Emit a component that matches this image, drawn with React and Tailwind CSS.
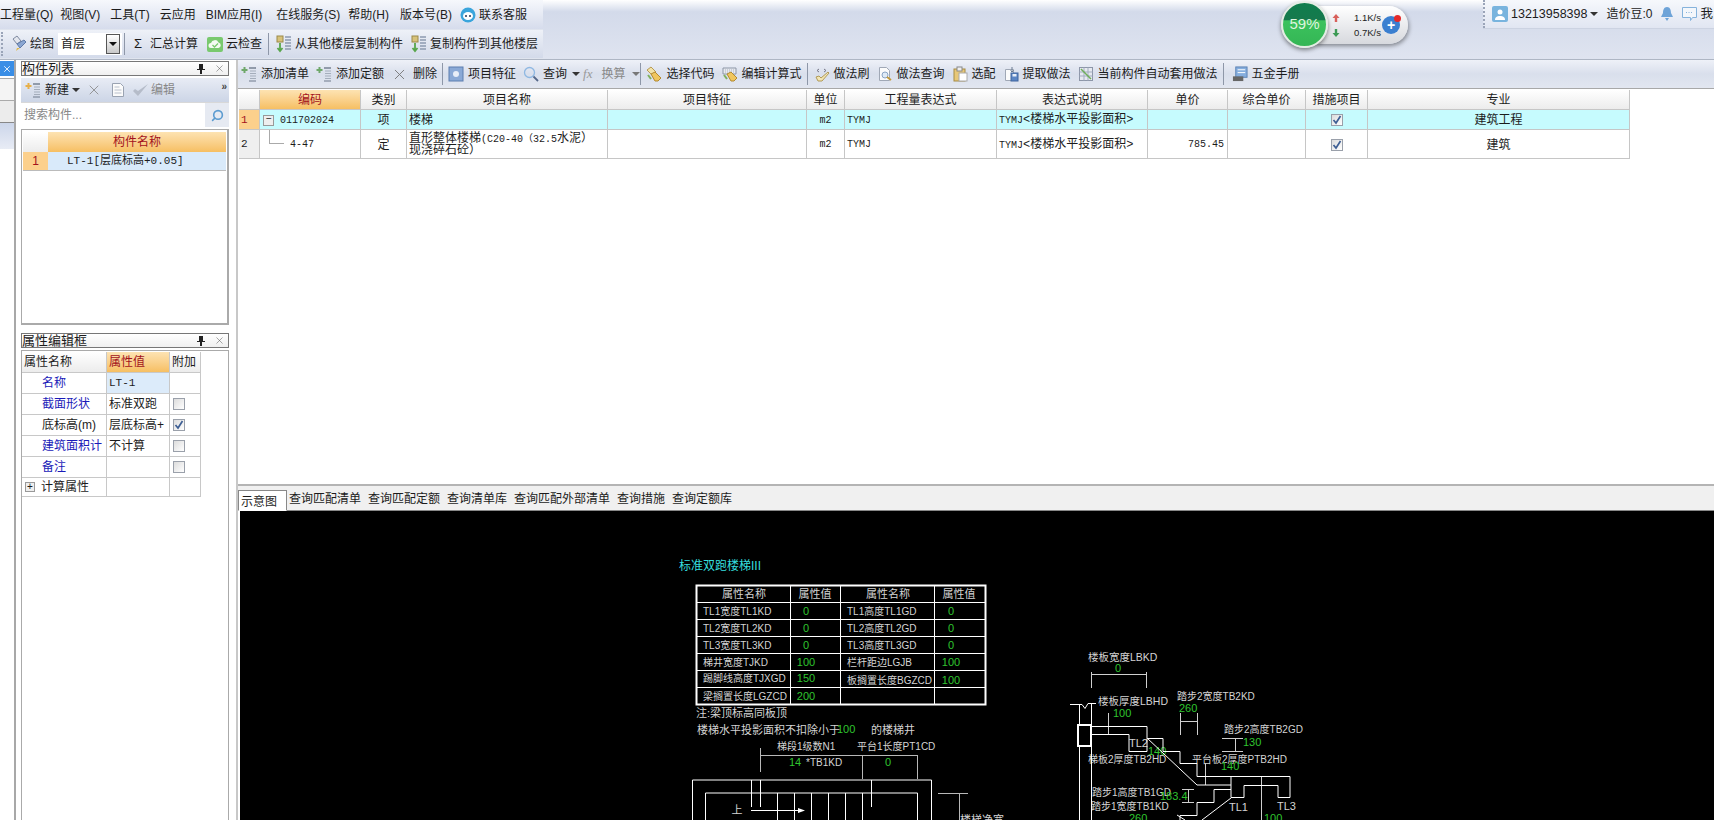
import { Search, X } from 'lucide-react'

const cjk = 'font-["Liberation_Sans","Noto_Sans_CJK_SC",sans-serif]'
const mono = 'font-["Liberation_Mono","Noto_Sans_CJK_SC",monospace]'
const headCell = 'bg-gradient-to-b from-white to-[#ececec]'
const orangeCell = 'bg-gradient-to-b from-[#fde3b2] to-[#f6bf62] text-[#a3121c]'

function PlusLines({ color = '#6fa86a' }) {
  return (
    <svg width="16" height="16" viewBox="0 0 16 16">
      <path d="M3.500 1v6M.5 4h6" stroke={color} strokeWidth="2" />
      <path d="M8 2h7" stroke="#6f7a8c" strokeWidth="1.4" />
      <path d="M9 5h6M9 7.500h6M9 10h6M9 12.500h6" stroke="#a4adbb" />
      <path d="M8 15h7" stroke="#6f7a8c" />
    </svg>
  )
}

function Doc({ fill = '#fbfbfb', accent = '#b9c0cc' }) {
  return (
    <svg width="16" height="16" viewBox="0 0 16 16">
      <path d="M2.500 1.500h8l3 3v10h-11z" fill={fill} stroke="#9aa3b2" />
      <path d="M4.500 5h5M4.500 8h7M4.500 11h7" stroke={accent} />
    </svg>
  )
}

function Hand({ keys }) {
  return (
    <svg width="16" height="16" viewBox="0 0 16 16">
      {keys ? (
        <path d="M1 2h13v6H1z" fill="#e7eaf0" stroke="#8d96a6" />
      ) : (
        <path d="M1 4l4-3 5 5-4 3z" fill="#f2e3a8" stroke="#b79a55" />
      )}
      {keys && <path d="M3 4h9M3 6h9" stroke="#a9b1c0" strokeDasharray="1 1" />}
      <path d="M5 8l4-2 6 6-3 3h-3z" fill="#f0c65e" stroke="#b38a30" />
      <path d="M2 9l3 4" stroke="#7fb05e" strokeWidth="2" />
    </svg>
  )
}

function TreeCopy({ arrow }) {
  return (
    <svg width="17" height="18" viewBox="0 0 17 18">
      <rect x="2" y="1" width="6" height="6" fill="#d7c27a" stroke="#9c8a4a" />
      <path d="M5 8v8M2.500 13l2.500 3 2.500-3" fill="none" stroke={arrow} strokeWidth="1.8" />
      <path d="M10 2h6M10 5h6M10 8h6M10 11h6M10 14h6" stroke="#8d9bb0" strokeWidth="1.3" />
    </svg>
  )
}

function Check({ on }) {
  return (
    <span className="flex h-[12px] w-[12px] items-center justify-center border border-[#9aa0aa] bg-gradient-to-br from-[#dcdcdc] to-white">
      {on && (
        <svg width="10" height="10" viewBox="0 0 10 10">
          <path d="M1.5 5l2.5 3 4.5-7" fill="none" stroke="#3e5f94" strokeWidth="1.7" />
        </svg>
      )}
    </span>
  )
}

function Caret({ color = '#333' }) {
  return <span className="block h-0 w-0 border-x-[4px] border-t-[4px] border-x-transparent" style={{ borderTopColor: color }} />
}

function Sep({ className = '' }) {
  return <span className={`h-[22px] w-px bg-[#8e97a8] ${className}`} />
}

function Tool({ icon, label, gray, className = '' }) {
  return (
    <div className={`flex items-center gap-[4px] ${gray ? 'text-[#888]' : 'text-[#1c1c1c]'} ${className}`}>
      {icon}
      <span>{label}</span>
    </div>
  )
}

function TopBar() {
  const menus = [
    ['工程量(Q)', 0],
    ['视图(V)', 7],
    ['工具(T)', 10],
    ['云应用', 10],
    ['BIM应用(I)', 10],
    ['在线服务(S)', 14],
    ['帮助(H)', 8],
    ['版本号(B)', 11],
  ]
  return (
    <div className="relative flex h-[60px] shrink-0 justify-between border-b border-[#aeb6c4] bg-gradient-to-b from-white via-[#d3daea] via-20% to-[#dfe4f0]">
      <div className="w-[543px]">
        <div className="flex h-[29px] items-center bg-gradient-to-b from-[#f6f8fc] to-[#d6dcec] text-[12px] text-[#1c1c1c]">
          {menus.map(([m, ml]) => (
            <span key={m} style={{ marginLeft: ml }}>{m}</span>
          ))}
          <svg className="ml-[8px]" width="16" height="16" viewBox="0 0 16 16">
            <circle cx="8" cy="8" r="7.500" fill="#3aa5dc" />
            <ellipse cx="8" cy="9" rx="5" ry="4" fill="#fff" />
            <circle cx="6" cy="9" r="1" fill="#235" />
            <circle cx="10" cy="9" r="1" fill="#235" />
          </svg>
          <span className="ml-[3px]">联系客服</span>
        </div>
        <div className="flex h-[30px] items-center border-y border-[#dfe4ee] bg-gradient-to-b from-[#eef1f8] to-[#d3daea] pl-[1px] text-[12px] text-[#1c1c1c]">
          <span className="h-[24px] w-[3px] border-l-2 border-dotted border-[#9aa4b8]" />
          <svg className="ml-[6px]" width="18" height="18" viewBox="0 0 18 18">
            <path d="M3 4l4-3 4 5-4 3z" fill="#e3e6ee" stroke="#7f8aa0" />
            <path d="M7 9l7-4 2 2-6 6z" fill="#8aa6d2" stroke="#5f7aa8" />
            <path d="M7 13l3 0-4 3z" fill="#e0b94e" />
          </svg>
          <span className="ml-[2px]">绘图</span>
          <div className="ml-[4px] flex h-[22px] w-[64px] items-center justify-between bg-white pl-[3px]">
            <span>首层</span>
            <span className="mr-[2px] flex h-[20px] w-[14px] items-center justify-center border border-[#555] bg-gradient-to-b from-white to-[#c9c9c9]">
              <Caret color="#111" />
            </span>
          </div>
          <Sep className="ml-[2px]" />
          <span className="ml-[9px] text-[13px]">Σ</span>
          <span className="ml-[8px]">汇总计算</span>
          <svg className="ml-[9px]" width="16" height="15" viewBox="0 0 16 15">
            <rect width="16" height="15" rx="2" fill="#79c96e" />
            <path d="M4 11a2.500 2.500 0 010-5 4 4 0 017.500-.500 2.800 2.800 0 010 5.500z" fill="#f4fbf2" />
            <path d="M5.500 8l2 2 3.500-3.500" fill="none" stroke="#79c96e" strokeWidth="1.300" />
          </svg>
          <span className="ml-[3px]">云检查</span>
          <Sep className="ml-[6px]" />
          <span className="ml-[6px]"><TreeCopy arrow="#58a64c" /></span>
          <span className="ml-[3px]">从其他楼层复制构件</span>
          <span className="ml-[7px]"><TreeCopy arrow="#58a64c" /></span>
          <span className="ml-[3px]">复制构件到其他楼层</span>
        </div>
      </div>

      <div className="absolute left-[1281px] top-[1px] z-10 flex">
        <div className="relative z-10 flex h-[47px] w-[47px] items-center justify-center rounded-full border-2 border-[#e4ece4] bg-[linear-gradient(180deg,#0f7d4d_0%,#16794d_40%,#3cc25d_41%,#34b655_100%)] text-[15px] text-[#dff4df] shadow-[0_2px_4px_rgba(0,0,0,0.45)]">
          59%
        </div>
        <div className="relative -ml-[12px] mt-[5px] flex h-[38px] w-[92px] items-center rounded-r-full bg-gradient-to-b from-white to-[#d7d9de] pl-[16px] text-[9.5px] leading-[15px] text-[#222] shadow-[1px_2px_4px_rgba(0,0,0,0.4)]">
          <div className="flex flex-col gap-[7px]">
            <svg width="8" height="8" viewBox="0 0 8 8">
              <path d="M4 0l3.500 4H5.200v4H2.800V4H.5z" fill="#d8605a" />
            </svg>
            <svg width="8" height="8" viewBox="0 0 8 8">
              <path d="M4 8l3.500-4H5.200V0H2.800v4H.5z" fill="#3d9a55" />
            </svg>
          </div>
          <div className="ml-[14px] flex flex-col">
            <span>1.1K/s</span>
            <span>0.7K/s</span>
          </div>
          <span className="absolute left-[66px] top-[10px] flex h-[18px] w-[18px] items-center justify-center rounded-full bg-[#3a7fd0] text-[14px] font-bold leading-none text-white">+</span>
          <span className="absolute left-[78px] top-[9px] h-[7px] w-[7px] rounded-full bg-[#e52a2a]" />
        </div>
      </div>

      <div className="flex h-[29px] w-[231px] items-center border-b border-[#ccd3e2] bg-gradient-to-b from-[#f6f8fc] to-[#e1e6f2] text-[12.5px] text-[#1c1c1c]">
        <span className="h-full w-[2px] border-l-2 border-dotted border-[#9aa4b8]" />
        <span className="ml-[7px] flex h-[16px] w-[16px] items-center justify-center rounded-[2px] bg-[#79b4de]">
          <svg width="12" height="12" viewBox="0 0 12 12">
            <circle cx="6" cy="4" r="2.500" fill="#fff" />
            <path d="M1 12c0-3 2-4 5-4s5 1 5 4z" fill="#fff" />
          </svg>
        </span>
        <span className="ml-[3px]">13213958398</span>
        <span className="ml-[3px] mr-[8px]"><Caret /></span>
        <span className="text-[12px]">造价豆:0</span>
        <svg className="ml-[7px]" width="14" height="16" viewBox="0 0 14 16">
          <path d="M7 1c3 0 4 3 4 6l2 4H1l2-4c0-3 1-6 4-6zM5 12h4l-2 3z" fill="#6da3d8" />
        </svg>
        <svg className="ml-[7px]" width="17" height="16" viewBox="0 0 17 16">
          <path d="M1.500 1.500h14v10h-4l-2 3v-3h-8z" fill="#f4f7fb" stroke="#86b3dc" />
          <path d="M5 6.500h7" stroke="#86b3dc" strokeDasharray="1 1.500" />
        </svg>
        <span className="ml-[3px]">我</span>
      </div>
    </div>
  )
}

function LeftStrip() {
  return (
    <div className="flex w-[16px] shrink-0 flex-col border-r-2 border-[#a8a8a8] pt-[1px]">
      <div className="flex h-[15px] items-center justify-center bg-[#3a8ee6] text-white">
        <X size={10} />
      </div>
      <div className="mt-[2px] h-[23px] border-y border-[#aaa] bg-[#f4f4f4]" />
      <div className="h-[22px] border-b border-[#888] bg-[#ececec]" />
      <div className="h-[26px] bg-gradient-to-b from-[#ccd6ea] to-[#e8ecf5]" />
    </div>
  )
}

function PanelTitle({ title }) {
  return (
    <div className="flex h-[15px] items-center justify-between border border-[#777] bg-gradient-to-b from-white to-[#f0f0f0] text-[13px]">
      <span>{title}</span>
      <div className="flex items-center gap-[9px] pr-[3px] text-[#444]">
        <svg width="8" height="10" viewBox="0 0 8 10">
          <path d="M2 0h4v5h2v1H5v4H3V6H0V5h2z" fill="#222" />
        </svg>
        <X size={11} strokeWidth={1} />
      </div>
    </div>
  )
}

function ComponentPanel() {
  return (
    <div className="flex h-[264px] flex-col">
      <PanelTitle title="构件列表" />
      <div className="mt-[2px] flex h-[25px] items-center border-b border-[#d8d8d8] bg-gradient-to-b from-[#e8ecf5] to-[#ccd5e6] pl-[4px] text-[12px]">
        <PlusLines color="#e7b04a" />
        <span className="ml-[4px]">新建</span>
        <span className="ml-[3px]"><Caret /></span>
        <X className="ml-[6px] text-[#8a8a8a]" size={16} strokeWidth={1.3} />
        <span className="ml-[8px]"><Doc /></span>
        <svg className="ml-[5px]" width="18" height="16" viewBox="0 0 18 16">
          <path d="M2 9l5 5L17 2 7 9 4 7z" fill="#b5bcc9" />
        </svg>
        <span className="ml-[2px] text-[#888]">编辑</span>
        <span className="ml-auto mb-[8px] mr-[2px] text-[10px] font-bold text-[#444]">»</span>
      </div>
      <div className="flex h-[24px] items-center justify-between bg-white pl-[3px] text-[12px] text-[#888]">
        <span>搜索构件...</span>
        <span className="flex h-full w-[24px] items-center justify-center bg-[#e6eaf2]">
          <Search size={13} strokeWidth={3} className="-scale-x-100 text-[#5b9bd0]" />
        </span>
      </div>
      <div className="mt-[2px] flex-1 border-r-2 border-b-2 border-l border-t border-[#aaa] bg-white p-[1px] pt-[2px] text-[12px]">
        <div className="grid grid-cols-[25px_1fr]">
          <div className={`h-[20px] ${headCell}`} />
          <div className={`flex h-[20px] items-center justify-center ${orangeCell}`}>构件名称</div>
          <div className="flex h-[19px] items-center justify-center border-b border-[#bbb] bg-[#fcd08c] text-[#a3121c]">1</div>
          <div className={`flex h-[19px] items-center border-b border-[#bbb] bg-[#d9eafa] pl-[19px] text-[11px] ${mono}`}>LT-1[层底标高+0.05]</div>
        </div>
      </div>
    </div>
  )
}

function PropertyPanel() {
  const rows = [
    { name: '名称', value: 'LT-1', blue: true, active: true },
    { name: '截面形状', value: '标准双跑', blue: true, check: false },
    { name: '底标高(m)', value: '层底标高+', check: true },
    { name: '建筑面积计', value: '不计算', blue: true, check: false },
    { name: '备注', value: '', blue: true, check: false },
  ]
  return (
    <div className="mt-[8px] flex min-h-0 flex-1 flex-col">
      <PanelTitle title="属性编辑框" />
      <div className="mt-[2px] flex-1 border-x border-t border-[#aaa] bg-white pt-[1px] text-[12px]">
        <div className="grid w-[179px] grid-cols-[85px_63px_31px]">
          <div className={`flex h-[21px] items-center border-b border-r border-[#c8c8c8] pl-[2px] ${headCell}`}>属性名称</div>
          <div className={`flex h-[21px] items-center border-b border-r border-[#c8c8c8] pl-[2px] ${orangeCell}`}>属性值</div>
          <div className={`flex h-[21px] items-center border-b border-r border-[#c8c8c8] pl-[2px] ${headCell}`}>附加</div>
          {rows.map((r) => (
            <div key={r.name} className="contents">
              <div className={`flex h-[21px] items-center border-b border-r border-[#c8c8c8] pl-[20px] ${r.blue ? 'text-[#1a1ab8]' : 'text-[#1c1c1c]'}`}>{r.name}</div>
              <div className={`flex h-[21px] items-center border-b border-r border-[#c8c8c8] pl-[2px] ${r.active ? `bg-[#dcebfa] text-[11px] ${mono}` : ''}`}>{r.value}</div>
              <div className="flex h-[21px] items-center border-b border-r border-[#c8c8c8] pl-[3px]">
                {r.check !== undefined && <Check on={r.check} />}
              </div>
            </div>
          ))}
          <div className="flex h-[19px] items-center border-b border-r border-[#c8c8c8] pl-[3px]">
            <span className="flex h-[10px] w-[10px] items-center justify-center border border-[#999] bg-[#eee] text-[10px] leading-none">+</span>
            <span className="ml-[6px]">计算属性</span>
          </div>
          <div className="h-[19px] border-b border-r border-[#c8c8c8]" />
          <div className="h-[19px] border-b border-r border-[#c8c8c8]" />
        </div>
      </div>
    </div>
  )
}

function MainToolbar() {
  return (
    <div className="flex h-[29px] shrink-0 items-center gap-[7px] border-b border-[#a8a8a8] bg-gradient-to-b from-[#eef1f8] via-[#d9dfec] to-[#e2e6f0] pl-[3px] text-[12px]">
      <Tool icon={<PlusLines />} label="添加清单" />
      <Tool icon={<PlusLines />} label="添加定额" />
      <Tool icon={<X size={17} strokeWidth={1.3} className="text-[#777]" />} label={<span className="ml-[1px]">删除</span>} />
      <Sep className="-mx-[2px]" />
      <Tool
        icon={
          <svg width="16" height="16" viewBox="0 0 16 16">
            <rect x="1" y="1" width="14" height="14" fill="#8aa9d6" stroke="#5c7fb0" />
            <circle cx="8" cy="8" r="3" fill="#e8eef8" />
          </svg>
        }
        label="项目特征"
      />
      <Tool
        icon={
          <svg width="16" height="16" viewBox="0 0 16 16">
            <circle cx="6.500" cy="6.500" r="5" fill="none" stroke="#8fb8e2" strokeWidth="1.300" />
            <path d="M10.500 10.500l4.500 4.500" stroke="#56688a" strokeWidth="1.800" />
          </svg>
        }
        label="查询"
      />
      <span className="-ml-[2px]"><Caret /></span>
      <span className={`-ml-[4px] text-[13px] italic text-[#999] font-["Liberation_Serif",serif]`}>fx</span>
      <span className="ml-[2px] text-[#888]">换算</span>
      <span className="-mr-[5px]"><Caret color="#777" /></span>
      <Sep className="-mx-[2px]" />
      <Tool icon={<Hand />} label="选择代码" />
      <Tool icon={<Hand keys />} label="编辑计算式" />
      <Sep className="-mx-[2px]" />
      <Tool
        className="ml-[1px]"
        icon={
          <svg width="16" height="16" viewBox="0 0 16 16">
            <path d="M5 3L3 4.500 5 6M10 3l2 1.500L10 6" fill="none" stroke="#778" />
            <path d="M2 11l3-1 2 2 7-6 1 1-7 8H4z" fill="#f3e6b4" stroke="#b09a58" />
          </svg>
        }
        label="做法刷"
      />
      <Tool
        icon={
          <svg width="16" height="16" viewBox="0 0 16 16">
            <path d="M2.500 1.500h7l3 3v10h-10z" fill="#fbfbfb" stroke="#a0a8b6" />
            <circle cx="8" cy="9" r="3" fill="#dfeaf6" stroke="#8aa4c4" />
            <path d="M10 11l4 3" stroke="#c49a3a" strokeWidth="1.800" />
          </svg>
        }
        label="做法查询"
      />
      <Tool
        icon={
          <svg width="16" height="16" viewBox="0 0 16 16">
            <rect x="2" y="3" width="11" height="12" fill="#e8c878" stroke="#a68b45" />
            <rect x="5" y="1" width="5" height="4" fill="#eee" stroke="#888" />
            <rect x="7" y="7" width="8" height="8" fill="#fff" stroke="#aaa" />
          </svg>
        }
        label="选配"
      />
      <Tool
        icon={
          <svg width="16" height="16" viewBox="0 0 16 16">
            <path d="M2.500 3.500h8v11h-8z" fill="#fbfbfb" stroke="#a0a8b6" />
            <rect x="8" y="7" width="7" height="8" fill="#5c86c4" stroke="#3f659e" />
            <rect x="9.500" y="8" width="4" height="2.500" fill="#e8eef8" />
            <path d="M9 1v5M7.500 4.500L9 6l1.500-1.500" fill="none" stroke="#6b7a90" />
          </svg>
        }
        label="提取做法"
      />
      <Tool
        icon={
          <svg width="16" height="16" viewBox="0 0 16 16">
            <rect x="1.500" y="1.500" width="13" height="13" fill="#e6e9f0" stroke="#8d96a8" />
            <path d="M1.500 6h13M1.500 10h13M6 1.500v13M10 1.500v13" stroke="#a3adc0" />
            <path d="M3 3l10 10" stroke="#6fae5a" strokeWidth="1.500" />
          </svg>
        }
        label="当前构件自动套用做法"
      />
      <Sep className="-mx-[2px]" />
      <Tool
        className="ml-[3px]"
        icon={
          <svg width="16" height="16" viewBox="0 0 17 17">
            <rect x="4" y="1" width="12" height="11" fill="#86aede" stroke="#5b82b5" />
            <path d="M6 4h8M6 7h8" stroke="#fff" />
            <rect x="1" y="11" width="11" height="5" fill="#666" />
          </svg>
        }
        label="五金手册"
      />
    </div>
  )
}

function BillTable() {
  const cols = ['编码', '类别', '项目名称', '项目特征', '单位', '工程量表达式', '表达式说明', '单价', '综合单价', '措施项目', '专业']
  const cell = 'flex items-center border-b border-r border-[#c6c6c6] pt-px'
  return (
    <div className="h-[395px] shrink-0 bg-white pl-[1px] pt-[1px] text-[12px] text-[#1c1c1c]">
      <div className="grid w-[1391px] grid-cols-[21px_101px_46px_201px_199px_38px_152px_151px_80px_78px_62px_262px] grid-rows-[20px_20px_29px]">
        <div className={`${cell} ${headCell}`} />
        {cols.map((c) => (
          <div key={c} className={`${cell} justify-center ${c === '编码' ? orangeCell : headCell}`}>{c}</div>
        ))}

        <div className={`${cell} bg-[#fcd08c] pl-[2px] text-[11px] text-[#a3121c] ${mono}`}>1</div>
        <div className={`${cell} bg-[#c6fbfe] pl-[3px] text-[10px] ${mono}`}>
          <span className="mr-[6px] flex h-[11px] w-[11px] items-center justify-center border border-[#999] bg-[#eee] text-[10px] leading-none">−</span>
          011702024
        </div>
        <div className={`${cell} justify-center bg-[#c6fbfe]`}>项</div>
        <div className={`${cell} bg-[#c6fbfe] pl-[2px]`}>楼梯</div>
        <div className={`${cell} bg-[#c6fbfe]`} />
        <div className={`${cell} justify-center bg-[#c6fbfe] text-[10px] ${mono}`}>m2</div>
        <div className={`${cell} bg-[#c6fbfe] pl-[2px] text-[10px] ${mono}`}>TYMJ</div>
        <div className={`${cell} bg-[#c6fbfe] pl-[2px] text-[10px] ${mono}`}><span>TYMJ<span className="text-[12px]">&lt;楼梯水平投影面积&gt;</span></span></div>
        <div className={`${cell} bg-[#c6fbfe]`} />
        <div className={`${cell} bg-[#c6fbfe]`} />
        <div className={`${cell} justify-center bg-[#c6fbfe]`}><Check on /></div>
        <div className={`${cell} justify-center bg-[#c6fbfe]`}>建筑工程</div>

        <div className={`${cell} bg-[#efefef] pl-[2px] text-[11px] ${mono}`}>2</div>
        <div className={`${cell} relative pl-[30px] text-[10px] ${mono}`}>
          <span className="absolute left-[9px] top-0 h-[14px] w-[15px] border-b border-l border-[#aaa]" />
          4-47
        </div>
        <div className={`${cell} justify-center`}>定</div>
        <div className={`${cell} pl-[2px] leading-[11px]`}>
          <span>直形整体楼梯<span className={`text-[10px] ${mono}`}>(C20-40（32.5</span>水泥）<br />现浇碎石砼）</span>
        </div>
        <div className={cell} />
        <div className={`${cell} justify-center text-[10px] ${mono}`}>m2</div>
        <div className={`${cell} pl-[2px] text-[10px] ${mono}`}>TYMJ</div>
        <div className={`${cell} pl-[2px] text-[10px] ${mono}`}><span>TYMJ<span className="text-[12px]">&lt;楼梯水平投影面积&gt;</span></span></div>
        <div className={`${cell} justify-end pr-[3px] text-[10px] ${mono}`}>785.45</div>
        <div className={cell} />
        <div className={`${cell} justify-center`}><Check on /></div>
        <div className={`${cell} justify-center`}>建筑</div>
      </div>
    </div>
  )
}

function Txt({ x, y, c = '#d4d4d4', a = 'start', s = 11, children }) {
  return (
    <text x={x} y={y} fill={c} fontSize={s} textAnchor={a} dominantBaseline="central">
      {children}
    </text>
  )
}

function Diagram() {
  const green = '#2fc42f'
  const left = [
    ['TL1宽度TL1KD', 611, '0'],
    ['TL2宽度TL2KD', 628, '0'],
    ['TL3宽度TL3KD', 645, '0'],
    ['梯井宽度TJKD', 662, '100'],
    ['踢脚线高度TJXGD', 678, '150'],
    ['梁搁置长度LGZCD', 696, '200'],
  ]
  const right = [
    ['TL1高度TL1GD', 611, '0'],
    ['TL2高度TL2GD', 628, '0'],
    ['TL3高度TL3GD', 645, '0'],
    ['栏杆距边LGJB', 662, '100'],
    ['板搁置长度BGZCD', 680, '100'],
  ]
  const treads = [751, 760, 777, 794, 811, 828, 845, 862, 871]
  return (
    <svg className="block h-full w-full bg-black" viewBox="240 511 1474 309" style={{ fontFamily: '"Liberation Sans","Noto Sans CJK SC",sans-serif' }}>
      <Txt x={679} y={566} c="#35dede" s={12}>标准双跑楼梯III</Txt>

      <rect x="696.500" y="585.500" width="289" height="119" fill="none" stroke="#fff" strokeWidth="2" />
      <path d="M790.500 585v119M840.500 585v119M934.500 585v119M696 602.500h289M696 619.500h289M696 636.500h289M696 653.500h289M696 670.500h289M696 687.500h289" stroke="#fff" />
      <Txt x={744} y={594} a="middle">属性名称</Txt>
      <Txt x={815} y={594} a="middle">属性值</Txt>
      <Txt x={888} y={594} a="middle">属性名称</Txt>
      <Txt x={959} y={594} a="middle">属性值</Txt>
      {left.map(([t, y, v]) => (
        <g key={t}>
          <Txt x={703} y={y} s={10}>{t}</Txt>
          <Txt x={806} y={y} a="middle" c={green}>{v}</Txt>
        </g>
      ))}
      {right.map(([t, y, v]) => (
        <g key={t}>
          <Txt x={847} y={y} s={10}>{t}</Txt>
          <Txt x={951} y={y} a="middle" c={green}>{v}</Txt>
        </g>
      ))}

      <Txt x={696} y={713}>注:梁顶标高同板顶</Txt>
      <Txt x={697} y={730}>楼梯水平投影面积不扣除小于</Txt>
      <Txt x={837} y={729} c={green}>100</Txt>
      <Txt x={871} y={730}>的楼梯井</Txt>
      <Txt x={777} y={746} s={10}>梯段1级数N1</Txt>
      <Txt x={857} y={746} s={10}>平台1长度PT1CD</Txt>
      <Txt x={789} y={762} c={green}>14</Txt>
      <Txt x={806} y={762} s={10}>*TB1KD</Txt>
      <Txt x={888} y={762} a="middle" c={green}>0</Txt>

      <g fill="none" stroke="#d8d8d8">
        <path d="M760.500 748v24M862.500 755v24M917.500 755v24M760 755.500h157" stroke="#b8b8b8" />
        <path d="M692.500 820v-40h239v40M705.500 820v-27h212v27" stroke="#fff" />
        {treads.map((x) => (
          <path key={x} d={`M${x}.5 ${x === 760 || x === 871 || x === 751 ? 780 : 793}v27`} stroke="#fff" />
        ))}
        <path d="M751 810.500h52" stroke="#fff" />
        <path d="M938 793.500h30M959.500 793v27" stroke="#b8b8b8" />
      </g>
      <path d="M798 808l7 2.500-7 2.500z" fill="#fff" />
      <Txt x={737} y={810} a="middle">上</Txt>
      <Txt x={960} y={820}>楼梯净宽</Txt>

      <Txt x={1088} y={657} s={10.500}>楼板宽度LBKD</Txt>
      <Txt x={1118} y={668} a="middle" c={green}>0</Txt>
      <Txt x={1098} y={701} s={10.500}>楼板厚度LBHD</Txt>
      <Txt x={1113} y={713} c={green}>100</Txt>
      <Txt x={1177} y={696} s={10}>踏步2宽度TB2KD</Txt>
      <Txt x={1179} y={708} c={green}>260</Txt>
      <Txt x={1224} y={729} s={10}>踏步2高度TB2GD</Txt>
      <Txt x={1243} y={742} c={green}>130</Txt>
      <Txt x={1148} y={751} c={green}>140</Txt>
      <Txt x={1129} y={743}>TL2</Txt>
      <Txt x={1088} y={759} s={10}>梯板2厚度TB2HD</Txt>
      <Txt x={1192} y={759} s={10}>平台板2厚度PTB2HD</Txt>
      <Txt x={1221} y={766} c={green}>140</Txt>
      <Txt x={1092} y={792} s={10}>踏步1高度TB1GD</Txt>
      <Txt x={1160} y={796} c={green}>183.4</Txt>
      <Txt x={1091} y={806} s={10}>踏步1宽度TB1KD</Txt>
      <Txt x={1129} y={818} c={green}>260</Txt>
      <Txt x={1229} y={807}>TL1</Txt>
      <Txt x={1277} y={806}>TL3</Txt>
      <Txt x={1264} y={818} c={green}>100</Txt>

      <g fill="none" stroke="#cfcfcf">
        <path d="M1091.500 672v16M1146.500 672v16M1091 674.500h55" />
        <path d="M1180.500 713v22M1197.500 713v22M1180 721.500h17" />
        <path d="M1222 738.500h21M1222 751.500h21M1235.500 738v13" />
        <path d="M1182 789.500h12M1182 802.500h12M1188.500 789v13" />
        <path d="M1108.500 713v21M1205.500 763v22M1261.500 776v44" />
      </g>
      <g fill="none" stroke="#fff">
        <path d="M1070 704.500h12l3 4 3-5h8" />
        <path d="M1079.500 704v116M1091.500 704v116" />
        <rect x="1078" y="725" width="13" height="21" strokeWidth="2" fill="#000" />
        <path d="M1092 726.500h55v12h16v13h17v12h17v13h93v21h-12v-12h-34v12h-13v-21" />
        <path d="M1092 734.500h37v17h18v-13" />
        <path d="M1147 738l50 47h34" />
        <path d="M1231 789.500h-17v13h-17v13h-17v5" />
        <path d="M1231 798l-29 22M1177 815l8 5" />
      </g>
    </svg>
  )
}

function BottomTabs() {
  const tabs = ['查询匹配清单', '查询匹配定额', '查询清单库', '查询匹配外部清单', '查询措施', '查询定额库']
  return (
    <div className="flex h-[21px] shrink-0 items-end border-b border-[#888] bg-[#f0f0f0] text-[12px] text-[#1c1c1c]">
      <span className="-mb-px flex h-[21px] w-[49px] items-center border border-[#888] border-b-white bg-white pl-[2px] pt-[2px]">示意图</span>
      <div className="ml-[2px] flex h-full gap-[7px] pb-[2px]">
        {tabs.map((t) => (
          <span key={t} className="flex items-center">{t}</span>
        ))}
      </div>
    </div>
  )
}

export default function App() {
  return (
    <div className={`flex h-[820px] w-[1714px] flex-col overflow-hidden whitespace-nowrap bg-white ${cjk}`}>
      <TopBar />
      <div className="flex min-h-0 flex-1">
        <LeftStrip />
        <div className="ml-[5px] flex w-[208px] shrink-0 flex-col pt-[1px] text-[#1c1c1c]">
          <ComponentPanel />
          <PropertyPanel />
        </div>
        <div className="flex min-w-0 flex-1 flex-col pl-[7px]">
          <div className="flex min-h-0 flex-1 flex-col border-l-2 border-[#c8c8c8]">
            <MainToolbar />
            <BillTable />
            <div className="h-[6px] shrink-0 border-t-2 border-[#b4b4b4] bg-[#f0f0f0]" />
            <BottomTabs />
            <div className="min-h-0 flex-1 pl-[2px]">
              <Diagram />
            </div>
          </div>
        </div>
      </div>
    </div>
  )
}
